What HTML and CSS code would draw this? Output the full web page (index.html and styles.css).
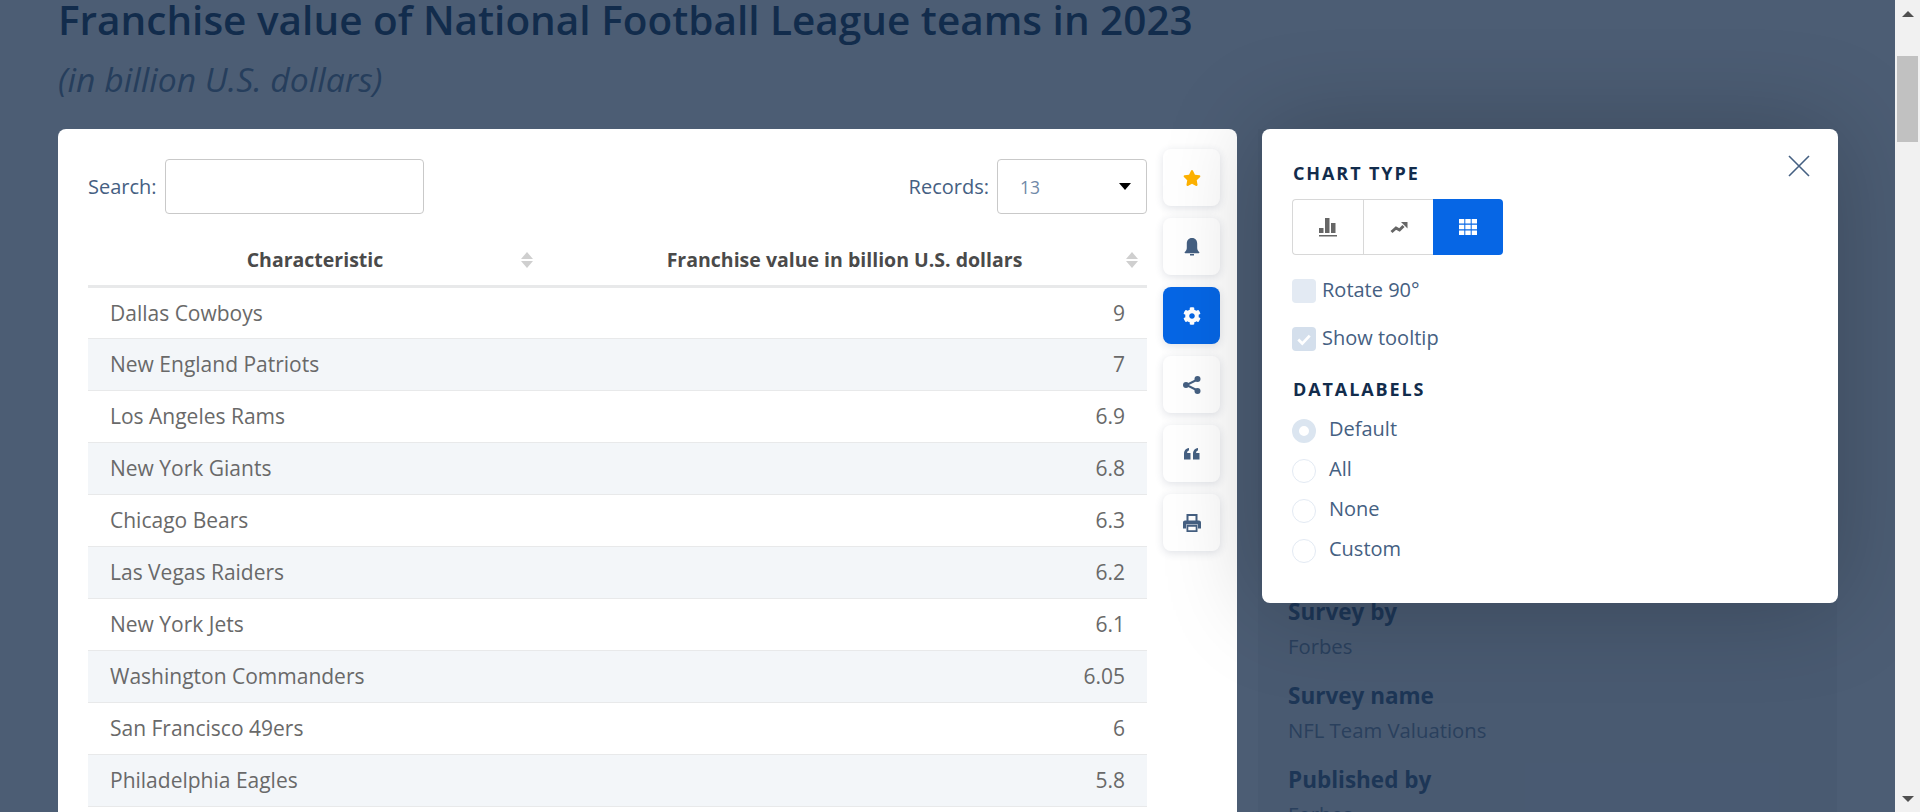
FILE: index.html
```html
<!DOCTYPE html>
<html lang="en">

<head>
  <meta charset="UTF-8">
  <meta name="viewport" content="width=device-width, initial-scale=1.0">
  <title>Franchise value of National Football League teams in 2023</title>
  <link rel="stylesheet" href="styles.css">
</head>

<body>
  <div class="page">
    <h1 class="page-title">Franchise value of National Football League teams in 2023</h1>
    <p class="page-subtitle">(in billion U.S. dollars)</p>

    <div class="content">
      <!-- Table card -->
      <div class="card">
        <div class="card-main">
          <div class="table-controls">
            <label class="control">Search: <input class="search-input" type="text"></label>
            <div class="control">
              Records:
              <div class="records-select"><span>13</span><i class="select-arrow"></i></div>
            </div>
          </div>

          <table class="data-table">
            <thead>
              <tr>
                <th class="col-name">Characteristic<span class="sort"><i class="sort-up"></i><i class="sort-down"></i></span></th>
                <th class="col-value">Franchise value in billion U.S. dollars<span class="sort"><i class="sort-up"></i><i class="sort-down"></i></span></th>
              </tr>
            </thead>
            <tbody>
              <tr><td>Dallas Cowboys</td><td>9</td></tr>
              <tr><td>New England Patriots</td><td>7</td></tr>
              <tr><td>Los Angeles Rams</td><td>6.9</td></tr>
              <tr><td>New York Giants</td><td>6.8</td></tr>
              <tr><td>Chicago Bears</td><td>6.3</td></tr>
              <tr><td>Las Vegas Raiders</td><td>6.2</td></tr>
              <tr><td>New York Jets</td><td>6.1</td></tr>
              <tr><td>Washington Commanders</td><td>6.05</td></tr>
              <tr><td>San Francisco 49ers</td><td>6</td></tr>
              <tr><td>Philadelphia Eagles</td><td>5.8</td></tr>
            </tbody>
          </table>
        </div>

        <!-- Tool buttons -->
        <div class="tools">
          <button class="tool-btn">
            <svg class="icon-star" viewBox="0 0 576 512"><path d="M259.3 17.8L194 150.2 47.9 171.5c-26.2 3.8-36.7 36.1-17.7 54.6l105.7 103-25 145.5c-4.5 26.3 23.2 46 46.4 33.7L288 439.6l130.7 68.7c23.2 12.2 50.9-7.4 46.4-33.7l-25-145.5 105.7-103c19-18.5 8.5-50.8-17.7-54.6L382 150.2 316.7 17.8c-11.7-23.6-45.6-23.9-57.4 0z"/></svg>
          </button>
          <button class="tool-btn">
            <svg viewBox="0 0 18 18"><path d="M9 0C5.400 0 3.800 2.600 3.800 5.500V10c0 1.600-.9 3-2 4-.5.5-.2 1.200.5 1.200h13.400c.7 0 1-.7.5-1.200-1.100-1-2-2.400-2-4V5.500C14.200 2.600 12.600 0 9 0z"/><rect x="7" y="16" width="4" height="1.500"/></svg>
          </button>
          <button class="tool-btn tool-btn-active">
            <svg viewBox="0 0 512 512"><path d="M487.4 315.7l-42.6-24.6c4.3-23.2 4.3-47 0-70.2l42.6-24.6c4.9-2.8 7.1-8.6 5.5-14-11.1-35.6-30-67.8-54.7-94.6-3.8-4.1-10-5.1-14.8-2.3L380.8 110c-17.9-15.4-38.5-27.3-60.8-35.1V25.8c0-5.6-3.9-10.5-9.4-11.7-36.7-8.2-74.3-7.8-109.2 0-5.5 1.2-9.4 6.1-9.4 11.7V75c-22.2 7.9-42.8 19.8-60.8 35.1L88.7 85.5c-4.9-2.8-11-1.9-14.8 2.3-24.7 26.7-43.6 58.9-54.7 94.6-1.7 5.4.6 11.2 5.5 14L67.3 221c-4.3 23.2-4.3 47 0 70.2l-42.6 24.6c-4.9 2.8-7.1 8.6-5.5 14 11.1 35.6 30 67.8 54.7 94.6 3.8 4.1 10 5.1 14.8 2.3l42.6-24.6c17.9 15.4 38.5 27.3 60.8 35.1v49.2c0 5.6 3.9 10.5 9.4 11.7 36.7 8.2 74.3 7.8 109.2 0 5.5-1.2 9.4-6.1 9.4-11.7v-49.2c22.2-7.9 42.8-19.8 60.8-35.1l42.6 24.6c4.9 2.8 11 1.9 14.8-2.3 24.7-26.7 43.6-58.9 54.7-94.6 1.5-5.500-.7-11.300-5.600-14.100zM256 336c-44.100 0-80-35.900-80-80s35.900-80 80-80 80 35.900 80 80-35.900 80-80 80z"/></svg>
          </button>
          <button class="tool-btn">
            <svg viewBox="0 0 18 18"><path d="M14.500 3.500L3.500 9l11 5.500" fill="none" stroke="#456082" stroke-width="2"/><circle cx="14.500" cy="3" r="3"/><circle cx="3" cy="9" r="3"/><circle cx="14.500" cy="15" r="3"/></svg>
          </button>
          <button class="tool-btn">
            <svg viewBox="0 0 18 18"><path d="M1 9C1 6 2.500 3.500 6 3v2.500C4.800 5.800 4.200 6.600 4.100 8H7.500v6.500H1zM10 9c0-3 1.500-5.500 5-6v2.500c-1.200.3-1.800 1.100-1.900 2.500h3.400v6.500H10z"/></svg>
          </button>
          <button class="tool-btn">
            <svg viewBox="0 0 18 18"><path d="M3.500 0h11v7h-2V2h-7v5h-2zM2 6.500h14c1.100 0 2 .9 2 2v6h-3v-4H3v4H0v-6c0-1.100.9-2 2-2z"/><path fill-rule="evenodd" d="M3.500 11h11v7h-11zM5.300 12.800v3.400h7.400v-3.400z"/></svg>
          </button>
        </div>
      </div>

      <!-- Source info, behind the popup -->
      <div class="info">
        <h3 class="info-label">Survey by</h3>
        <p class="info-value">Forbes</p>
        <h3 class="info-label">Survey name</h3>
        <p class="info-value">NFL Team Valuations</p>
        <h3 class="info-label">Published by</h3>
        <p class="info-value">Forbes</p>
      </div>
    </div>

    <!-- Settings popup -->
    <div class="popup">
      <svg class="popup-close" viewBox="0 0 22 22"><path d="M1 1l20 20M21 1L1 21" fill="none" stroke="#456082" stroke-width="1.600"/></svg>

      <h4 class="popup-heading">CHART TYPE</h4>
      <div class="chart-types">
        <button class="chart-btn">
          <svg class="icon-bars" viewBox="0 0 18 19"><path d="M0 10h4.500v5H0zM6 0h4.500v15H6zM12 5h4.500v10H12zM0 17h18v1.500H0z"/></svg>
        </button>
        <button class="chart-btn">
          <svg viewBox="0 0 18 18"><path d="M1.500 14l4.500-4 3.500 2 4-4" fill="none" stroke="#666" stroke-width="3"/><path d="M11 4h6.500v6.500z"/></svg>
        </button>
        <button class="chart-btn chart-btn-active">
          <svg viewBox="0 0 18 16"><path d="M0 0h5.300v4.600H0zM6.300 0h5.400v4.600H6.300zM12.700 0H18v4.600h-5.300zM0 5.700h5.300v4.600H0zM6.300 5.700h5.400v4.600H6.300zM12.700 5.700H18v4.600h-5.300zM0 11.400h5.300V16H0zM6.300 11.400h5.400V16H6.300zM12.700 11.400H18V16h-5.300z"/></svg>
        </button>
      </div>

      <div class="check-row"><span class="check"></span><span class="option-label">Rotate 90°</span></div>
      <div class="check-row">
        <span class="check check-on"><svg viewBox="0 0 14 14"><path d="M2 7.500l3.500 3.500L12 4" fill="none" stroke="#fff" stroke-width="2.400"/></svg></span><span class="option-label">Show tooltip</span>
      </div>

      <h4 class="popup-heading popup-heading-labels">DATALABELS</h4>
      <div class="radio-row"><span class="radio radio-on"></span><span class="option-label">Default</span></div>
      <div class="radio-row"><span class="radio"></span><span class="option-label">All</span></div>
      <div class="radio-row"><span class="radio"></span><span class="option-label">None</span></div>
      <div class="radio-row"><span class="radio"></span><span class="option-label">Custom</span></div>
    </div>
  </div>

  <!-- Scrollbar -->
  <div class="scrollbar">
    <i class="scroll-up"></i>
    <div class="scroll-thumb"></div>
    <i class="scroll-down"></i>
  </div>
</body>

</html>
```

FILE: styles.css
```css
:root {
  --overlay: #4c5d74;
  --navy: #122c4c;
  --blue: #0666e5;
  --slate: #456082;
  --text: #696969;
  --line: #e8e9ea;
}

* {
  box-sizing: border-box;
}

body {
  display: flex;
  height: 812px;
  margin: 0;
  overflow: hidden;
  background: var(--overlay);
  font-family: 'Open Sans', 'Noto Sans', sans-serif;
}

.page {
  position: relative;
  flex: 1;
  height: 812px;
  padding-left: 58px;
  overflow: hidden;
}

.page-title {
  margin: 0;
  font-size: 40.500px;
  font-weight: 600;
  line-height: 40px;
  color: var(--navy);
}

.page-subtitle {
  margin: 18px 0 0;
  font-size: 33.700px;
  font-style: italic;
  font-weight: 400;
  line-height: 42px;
  color: #263e5c;
}

.content {
  display: flex;
  align-items: flex-start;
  gap: 21px;
  margin-top: 29px;
}

.card {
  display: flex;
  width: 1179px;
  height: 800px;
  padding: 20px 17px 0 30px;
  flex-shrink: 0;
  background: #fff;
  border-radius: 8px;
}

.card-main {
  width: 1059px;
  padding-top: 10px;
}

.table-controls {
  display: flex;
  justify-content: space-between;
  height: 55px;
}

.control {
  display: flex;
  align-items: center;
  gap: 8px;
  font-size: 20px;
  color: var(--slate);
}

.search-input {
  width: 259px;
  height: 55px;
  border: 1px solid #c9c9c9;
  border-radius: 4px;
}

.records-select {
  display: flex;
  align-items: center;
  justify-content: space-between;
  width: 150px;
  height: 55px;
  padding: 0 15px 0 22px;
  border: 1px solid #c9c9c9;
  border-radius: 4px;
  font-size: 17.500px;
  color: #7089a8;
}

.select-arrow {
  width: 0;
  height: 0;
  border: 6px solid transparent;
  border-top: 7px solid #000;
  border-bottom: 0;
}

.data-table {
  width: 100%;
  border-collapse: collapse;
  table-layout: fixed;
}

.data-table th {
  position: relative;
  height: 72px;
  padding-top: 21px;
  border-bottom: 3px solid var(--line);
  font-size: 19.500px;
  font-weight: 700;
  color: #4a4a4a;
  text-align: center;
}

.col-name {
  width: 454px;
}

.sort {
  position: absolute;
  top: 38px;
  right: 9px;
  display: flex;
  flex-direction: column;
  gap: 2px;
}

.sort-up,
.sort-down {
  width: 0;
  height: 0;
  border-left: 6px solid transparent;
  border-right: 6px solid transparent;
}

.sort-up {
  border-bottom: 7px solid #cfcfcf;
}

.sort-down {
  border-top: 7px solid #cfcfcf;
}

.data-table td {
  height: 52px;
  padding: 0 22px;
  border-bottom: 1px solid var(--line);
  font-size: 21px;
  color: var(--text);
}

.data-table td:last-child {
  text-align: right;
}

.data-table tbody tr:nth-child(even) {
  background: #f3f6f9;
}

.tools {
  display: flex;
  flex-direction: column;
  gap: 12px;
  margin-left: 16px;
}

.tool-btn {
  display: flex;
  align-items: center;
  justify-content: center;
  width: 57px;
  height: 57px;
  padding: 0;
  border: 0;
  border-radius: 8px;
  background: #fff;
  box-shadow: 0 2px 8px rgba(40, 60, 90, 0.14);
}

.tool-btn svg {
  width: 18px;
  height: 18px;
  fill: var(--slate);
}

.tool-btn .icon-star {
  fill: #ffb300;
}

.tool-btn-active {
  background: var(--blue);
}

.tool-btn-active svg {
  fill: #fff;
}

.info {
  flex: 1;
  height: 800px;
  max-width: 579px;
  padding: 468px 0 0 30px;
  background: rgba(40, 60, 90, 0.08);
  margin-right: 20px;
}

.info-label {
  margin: 0;
  font-size: 22.500px;
  font-weight: 700;
  line-height: 30px;
  color: #1d3656;
}

.info-value {
  margin: 4px 0 20px;
  font-size: 20.300px;
  line-height: 30px;
  color: #2a405d;
}

.popup {
  position: absolute;
  top: 129px;
  left: 1262px;
  width: 576px;
  height: 474px;
  padding: 30px 30px 0;
  background: #fff;
  border-radius: 8px;
  box-shadow: 0 0 100px rgba(0, 0, 0, 0.22);
  font-size: 20px;
  color: var(--slate);
}

.popup-close {
  position: absolute;
  top: 26px;
  right: 28px;
  width: 22px;
  height: 22px;
}

.popup-heading {
  margin: 0 0 0 1px;
  font-size: 18px;
  font-weight: 700;
  letter-spacing: 1.900px;
  line-height: 28px;
  color: var(--navy);
}

.popup-heading-labels {
  margin-top: 22px;
}

.chart-types {
  display: flex;
  width: 211px;
  height: 56px;
  margin: 12px 0 24px;
}

.chart-btn {
  display: flex;
  align-items: center;
  justify-content: center;
  flex: 1;
  padding: 0;
  border: 1px solid #d8d8d8;
  border-right: 0;
  background: #fff;
}

.chart-btn:first-child {
  border-radius: 4px 0 0 4px;
}

.chart-btn svg {
  width: 18px;
  height: 18px;
  fill: #666;
}

.chart-btn .icon-bars {
  height: 19px;
}

.chart-btn-active {
  border: 0;
  border-radius: 0 4px 4px 0;
  background: var(--blue);
}

.chart-btn-active svg {
  height: 16px;
  fill: #fff;
}

.check-row {
  display: flex;
  align-items: center;
  gap: 6px;
  height: 24px;
  margin-bottom: 24px;
}

.check {
  display: flex;
  align-items: center;
  justify-content: center;
  width: 24px;
  height: 24px;
  border-radius: 4px;
  background: #e3eaf3;
}

.check-on {
  background: #d4dfec;
}

.check svg {
  width: 16px;
  height: 16px;
}

.option-label {
  margin-bottom: 3px;
}

.radio-row {
  display: flex;
  align-items: center;
  gap: 13px;
  height: 24px;
  margin-top: 16px;
}

.radio-row .option-label {
  margin-bottom: 5px;
}

.radio {
  width: 24px;
  height: 24px;
  border: 1px solid #e3eaf3;
  border-radius: 50%;
}

.radio-on {
  border: 7px solid #dbe5f0;
}

.scrollbar {
  display: flex;
  flex-direction: column;
  align-items: center;
  width: 25px;
  height: 812px;
  background: #f1f1f1;
}

.scroll-up,
.scroll-down {
  width: 0;
  height: 0;
  border-left: 6px solid transparent;
  border-right: 6px solid transparent;
}

.scroll-up {
  margin-top: 11px;
  border-bottom: 6px solid #505050;
}

.scroll-thumb {
  width: 21px;
  height: 86px;
  margin-top: 39px;
  background: #c1c1c1;
}

.scroll-down {
  margin-top: auto;
  margin-bottom: 10px;
  border-top: 6px solid #505050;
}
```
